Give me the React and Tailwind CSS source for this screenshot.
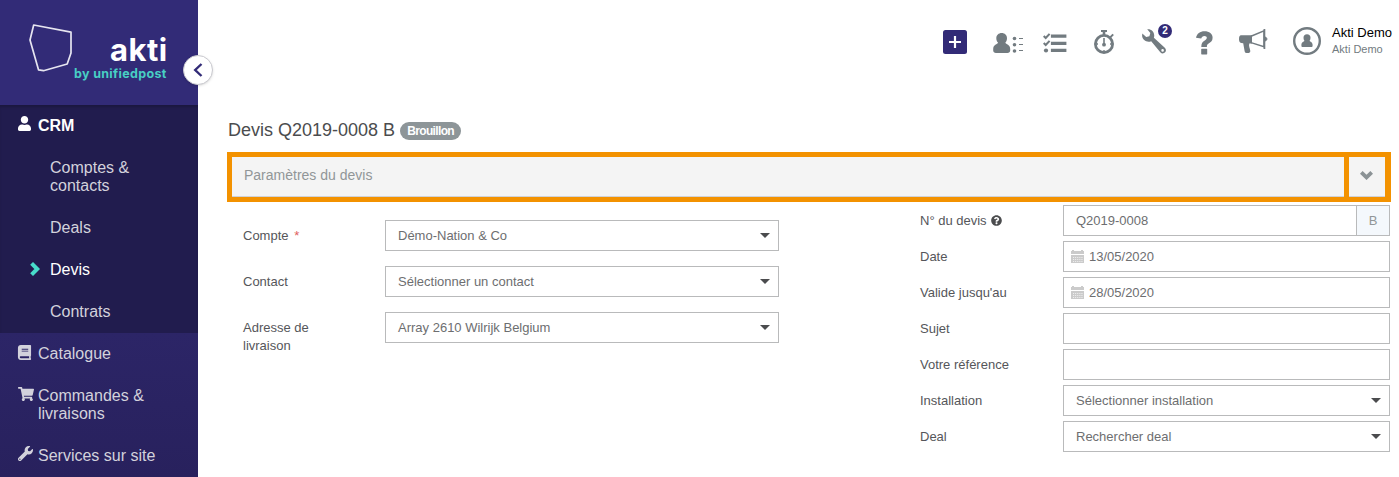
import { FaBook, FaQuestionCircle, FaShoppingCart, FaUser, FaWrench } from 'react-icons/fa';

const crmItems = [
  { label: 'Comptes & contacts' },
  { label: 'Deals' },
  { label: 'Devis', active: true },
  { label: 'Contrats' },
];

const menuItems = [
  { label: 'Catalogue', icon: <FaBook className="-ml-px h-[15px] w-[15px]" /> },
  { label: 'Commandes & livraisons', icon: <FaShoppingCart size={16} className="-mt-px" /> },
  { label: 'Services sur site', icon: <FaWrench size={15} className="-mt-px" /> },
];

function Logo() {
  return (
    <div className="flex h-[105px]">
      <svg width="46" height="52" viewBox="0 0 46 52" className="mt-[22px] ml-7">
        <path
          d="M5.7 3 L43 10.2 V31 L39.2 42 L15.5 48.7 L10.5 47.8 L2 18 Z"
          fill="none"
          stroke="#e6e5f0"
          strokeWidth="1.7"
          strokeLinejoin="round"
        />
      </svg>
      <div className="w-[94px] font-[Inter,sans-serif] font-bold whitespace-nowrap">
        <div className="pt-[35px] pl-9 text-[31px] leading-[30px] tracking-[0.5px] text-white">akti</div>
        <div className="pt-px text-[12.5px] leading-4 tracking-[0.33px] text-[#48cfc4]">by unifiedpost</div>
      </div>
    </div>
  );
}

function Sidebar() {
  return (
    <aside className="relative h-[477px] w-[198px] shrink-0 bg-[#322b77] text-base leading-[18px] text-[#d3d2dc]">
      <Logo />
      <button className="absolute top-[55px] left-[183px] flex h-[30px] w-[30px] items-center justify-center rounded-full border border-[#c9c9cf] bg-white shadow">
        <svg width="10" height="14" viewBox="0 0 10 14">
          <path d="M8.5 1 L2.2 7 L8.5 13" fill="none" stroke="#322b77" strokeWidth="2.4" />
        </svg>
      </button>

      <nav>
        <div className="bg-[#211c4e] shadow-[inset_0_3px_3px_-1px_rgba(0,0,0,0.2)]">
          <div className="flex h-[42px] gap-[7px] pt-3 pl-[18px] font-bold text-white">
            <FaUser className="-mt-px h-[15px] w-[13px]" />
            <span>CRM</span>
          </div>
          {crmItems.map((item) => (
            <div key={item.label} className={item.active ? 'flex py-3 pl-[30px] text-white' : 'flex py-3 pr-14 pl-[50px]'}>
              {item.active && (
                <svg width="10" height="14" viewBox="0 0 10 14" className="mt-px mr-2.5">
                  <path d="M1.6 1.4 L7.2 7 L1.6 12.6" fill="none" stroke="#48dccb" strokeWidth="4" />
                </svg>
              )}
              {item.label}
            </div>
          ))}
        </div>
        <div className="bg-linear-to-b from-[#2c2567] to-[#28215d]">
          {menuItems.map((item) => (
            <div key={item.label} className="flex py-3 pr-8 pl-[18px]">
              <span className="w-5 shrink-0">{item.icon}</span>
              <span>{item.label}</span>
            </div>
          ))}
        </div>
      </nav>
    </aside>
  );
}

function Topbar() {
  return (
    <header className="flex h-[83px] items-center text-[#727b80]">
      <svg width="24" height="24" viewBox="0 0 24 24" className="ml-[745px]">
        <rect width="24" height="24" rx="2.5" fill="#322b77" />
        <path d="M12 6 V18 M6 12 H18" stroke="#fff" strokeWidth="2.2" />
      </svg>

      <svg width="30" height="20" viewBox="0 0 30 20" className="mt-[3px] ml-[26px]" fill="currentColor">
        <path d="M8.7 0 C11.8 0 14 2.2 14 5.2 C14 7.4 13.1 8.7 12.3 9.7 C13 11.2 17.2 11.4 17.2 16 V17.5 C17.2 19 16 20 14.5 20 H3 C1.3 20 0.2 19 0.2 17.5 V16 C0.2 11.4 4.4 11.2 5.1 9.7 C4.2 8.7 3.3 7.4 3.3 5.2 C3.3 2.2 5.6 0 8.7 0 Z" />
        <circle cx="21.5" cy="5.5" r="1.8" />
        <circle cx="21.5" cy="11.7" r="1.8" />
        <circle cx="21.5" cy="18" r="1.8" />
        <path d="M26 5.5 H30 M26 11.5 H30 M26 17.5 H30" stroke="currentColor" strokeWidth="1" />
      </svg>

      <svg width="24" height="20" viewBox="0 0 24 20" className="mt-[3px] ml-5" fill="none" stroke="currentColor">
        <path d="M0.7 3 L2.7 5 L6.6 0.9 M0.7 10 L2.7 12 L6.6 7.9" strokeWidth="2.1" />
        <path d="M9.5 3.2 H21.8 M9.5 10.3 H21.8 M9.5 17.4 H21.8" strokeWidth="3.2" strokeLinecap="square" />
        <circle cx="3" cy="17.5" r="2.1" fill="currentColor" stroke="none" />
      </svg>

      <svg width="20" height="24" viewBox="0 0 20 24" className="ml-[27px]" fill="none" stroke="currentColor">
        <circle cx="10" cy="14" r="8.6" strokeWidth="2.8" />
        <path d="M7 1 H13" strokeWidth="2" />
        <path d="M10 1 V5" strokeWidth="2.6" />
        <path d="M16.2 7.4 L19.2 4.4" strokeWidth="2" />
        <path d="M10 8 V15" strokeWidth="1.6" />
        <circle cx="10" cy="14.7" r="1.9" fill="currentColor" stroke="none" />
        <path d="M10 20 V22 M2.3 14 H4 M16 14 H17.7" strokeWidth="1.4" />
      </svg>

      <div className="relative ml-7">
        <svg width="24" height="25" viewBox="0 0 24 25" fill="currentColor">
          <path
            fillRule="evenodd"
            d="M5.2 0.3 C9.3 -0.2 12.6 2.8 12.2 7.2 L11.9 8.8 L22.8 18.8 C24.4 20.4 24.2 22.4 22.9 23.6 C21.6 24.8 19.6 24.7 18.3 23.2 L9.2 12.2 C5 13.9 0.6 11.2 0.1 7 L0.3 4.6 L4.2 8 L7.4 7.3 L8.3 4.1 Z M20.6 20.1 A1.3 1.3 0 1 0 20.6 22.7 A1.3 1.3 0 1 0 20.6 20.1 Z"
          />
        </svg>
        <span className="absolute -top-[5px] left-4 flex h-3.5 w-3.5 items-center justify-center rounded-full bg-[#322b77] text-[10px] leading-none font-bold text-white">
          2
        </span>
      </div>

      <svg width="17" height="24" viewBox="0 0 17 24" className="mt-0.5 ml-[30px]" fill="currentColor">
        <path d="M0 6.7 C1 2.5 4 0.3 8.5 0.3 C13.3 0.3 16.6 2.8 16.6 6.7 C16.6 10 14.5 11.3 12.6 12.5 C11.2 13.4 10.9 14 10.9 16 H5.3 C5.3 12.5 6.3 11 8.4 9.7 C10 8.7 10.8 8.1 10.8 6.8 C10.8 5.6 9.9 4.9 8.4 4.9 C6.7 4.9 5.8 5.8 5.2 7.4 Z" />
        <rect x="5.2" y="17.8" width="6" height="5.6" rx="0.6" />
      </svg>

      <svg width="29" height="25" viewBox="0 0 29 25" className="ml-[26px]" fill="none" stroke="currentColor">
        <path d="M12 7.3 L25 1.8 V17.8 L12 13.6" strokeWidth="1.5" />
        <path d="M25.4 0 V20" strokeWidth="1.8" />
        <path d="M26 8 C28.6 8.3 28.6 11.7 26 12 Z" fill="currentColor" strokeWidth="0.8" />
        <path
          d="M2 6.3 H13 V14.6 H10.3 C9.4 17.5 11 19.3 11.3 22 C11.3 23.4 10.3 24 9 24 H7.5 C6.2 24 5.8 23 5.6 22 L4.2 14.2 C1.5 14.2 0 13 0 10.4 C0 7.7 0.7 6.3 2 6.3 Z"
          fill="currentColor"
          stroke="none"
        />
      </svg>

      <svg width="28" height="28" viewBox="0 0 28 28" className="-mt-px ml-[25px]">
        <circle cx="14" cy="14" r="12.8" fill="none" stroke="currentColor" strokeWidth="2.4" />
        <path
          d="M14 7.3 C16.2 7.3 17.5 8.6 17.5 10.7 C17.5 12 17.2 13 16.6 13.7 C17.2 14.8 19.6 15 19.6 17.8 V18.5 C19.6 19.5 19.2 20 18.2 20 H9.8 C8.8 20 8.4 19.5 8.4 18.5 V17.8 C8.4 15 10.8 14.8 11.4 13.7 C10.8 13 10.5 12 10.5 10.7 C10.5 8.6 11.8 7.3 14 7.3 Z"
          fill="currentColor"
        />
      </svg>

      <div className="ml-[11px] whitespace-nowrap">
        <div className="text-[13px] leading-4 text-black">Akti Demo</div>
        <div className="text-[11px] leading-[17px]">Akti Demo</div>
      </div>
    </header>
  );
}

function Select({ value }) {
  return (
    <div className="flex h-[31px] items-center justify-between border border-[#b9babb] pr-2 pl-3 text-[#6d6e70]">
      <span>{value}</span>
      <svg width="10" height="5" viewBox="0 0 10 5">
        <path d="M0 0 H10 L5 5 Z" fill="#4b4c4e" />
      </svg>
    </div>
  );
}

function CalendarIcon() {
  return (
    <svg width="13" height="13" viewBox="0 0 13 13" className="mr-[5px]">
      <path d="M0 1 H1 V0 H3 V1 H10 V0 H12 V1 H13 V4 H0 Z M0 5 H13 V13 H0 Z" fill="#cbcbcb" />
      <path d="M2 7.5 H11.5 M2 9.5 H11.5 M2 11.5 H11.5" stroke="#fff" strokeWidth="0.7" strokeDasharray="1.1 1" />
    </svg>
  );
}

function DateField({ value }) {
  return (
    <div className="flex h-[31px] items-center border border-[#b9babb] pl-[7px] text-[#6d6e70]">
      <CalendarIcon />
      {value}
    </div>
  );
}

function TextField() {
  return <div className="h-[31px] border border-[#b9babb]" />;
}

function Row({ label, children }) {
  return (
    <div className="grid grid-cols-[143px_327px]">
      <div className="flex items-center">{label}</div>
      {children}
    </div>
  );
}

function LeftRow({ label, value }) {
  return (
    <div className="grid h-[31px] grid-cols-[142px_394px]">
      <div className="w-20 pt-[7px]">{label}</div>
      <Select value={value} />
    </div>
  );
}

export default function App() {
  return (
    <div className="flex h-[477px] w-[1399px] overflow-hidden bg-white font-['Liberation_Sans',Arial,sans-serif]">
      <Sidebar />
      <main className="min-w-0 flex-1">
        <Topbar />

        <div className="flex h-[69px] items-start gap-[5px] pt-[37px] pl-[30px]">
          <h1 className="text-lg leading-5 text-[#4b4c4e]">Devis Q2019-0008 B</h1>
          <span className="mt-0.5 flex h-[18px] w-[61px] items-center justify-center rounded-full bg-[#8d9598] text-xs font-bold tracking-[-0.65px] text-white">
            Brouillon
          </span>
        </div>

        <div className="ml-[29px] flex h-[50px] w-[1164px] gap-[5px] bg-[#f39200] p-[5px] pr-1.5">
          <div className="flex flex-1 border-b border-[#cfd2d8] bg-[#f4f4f4] pt-2 pl-3 text-sm text-[#919698]">
            Paramètres du devis
          </div>
          <div className="flex w-9 border-b border-[#cfd2d8] bg-[#f4f4f4] pt-3.5 pl-[11px]">
            <svg width="13" height="9" viewBox="0 0 13 9">
              <path d="M1.3 1.4 L6.5 6.4 L11.7 1.4" fill="none" stroke="#8b9295" strokeWidth="3.8" />
            </svg>
          </div>
        </div>

        <div className="flex text-[13px] leading-[18px] text-[#55565a]">
          <div className="ml-[45px] flex flex-col gap-[15px] pt-[18px]">
            <LeftRow
              label={
                <>
                  Compte <span className="ml-0.5 text-[#e0605e]">*</span>
                </>
              }
              value="Démo-Nation & Co"
            />
            <LeftRow label="Contact" value="Sélectionner un contact" />
            <LeftRow label="Adresse de livraison" value="Array 2610 Wilrijk Belgium" />
          </div>

          <div className="ml-[141px] flex flex-col gap-[5px] pt-[3px]">
            <Row
              label={
                <>
                  N° du devis <FaQuestionCircle size={11} className="ml-1 text-[#4b4c4e]" />
                </>
              }
            >
              <div className="flex h-[31px] border border-[#b9babb] leading-[29px] text-[#6d6e70]">
                <span className="flex-1 pl-3">Q2019-0008</span>
                <span className="w-[33px] border-l border-[#b9babb] bg-[#f4f8fc] text-center text-[#919698]">B</span>
              </div>
            </Row>
            <Row label="Date">
              <DateField value="13/05/2020" />
            </Row>
            <Row label="Valide jusqu'au">
              <DateField value="28/05/2020" />
            </Row>
            <Row label="Sujet">
              <TextField />
            </Row>
            <Row label="Votre référence">
              <TextField />
            </Row>
            <Row label="Installation">
              <Select value="Sélectionner installation" />
            </Row>
            <Row label="Deal">
              <Select value="Rechercher deal" />
            </Row>
          </div>
        </div>
      </main>
    </div>
  );
}
